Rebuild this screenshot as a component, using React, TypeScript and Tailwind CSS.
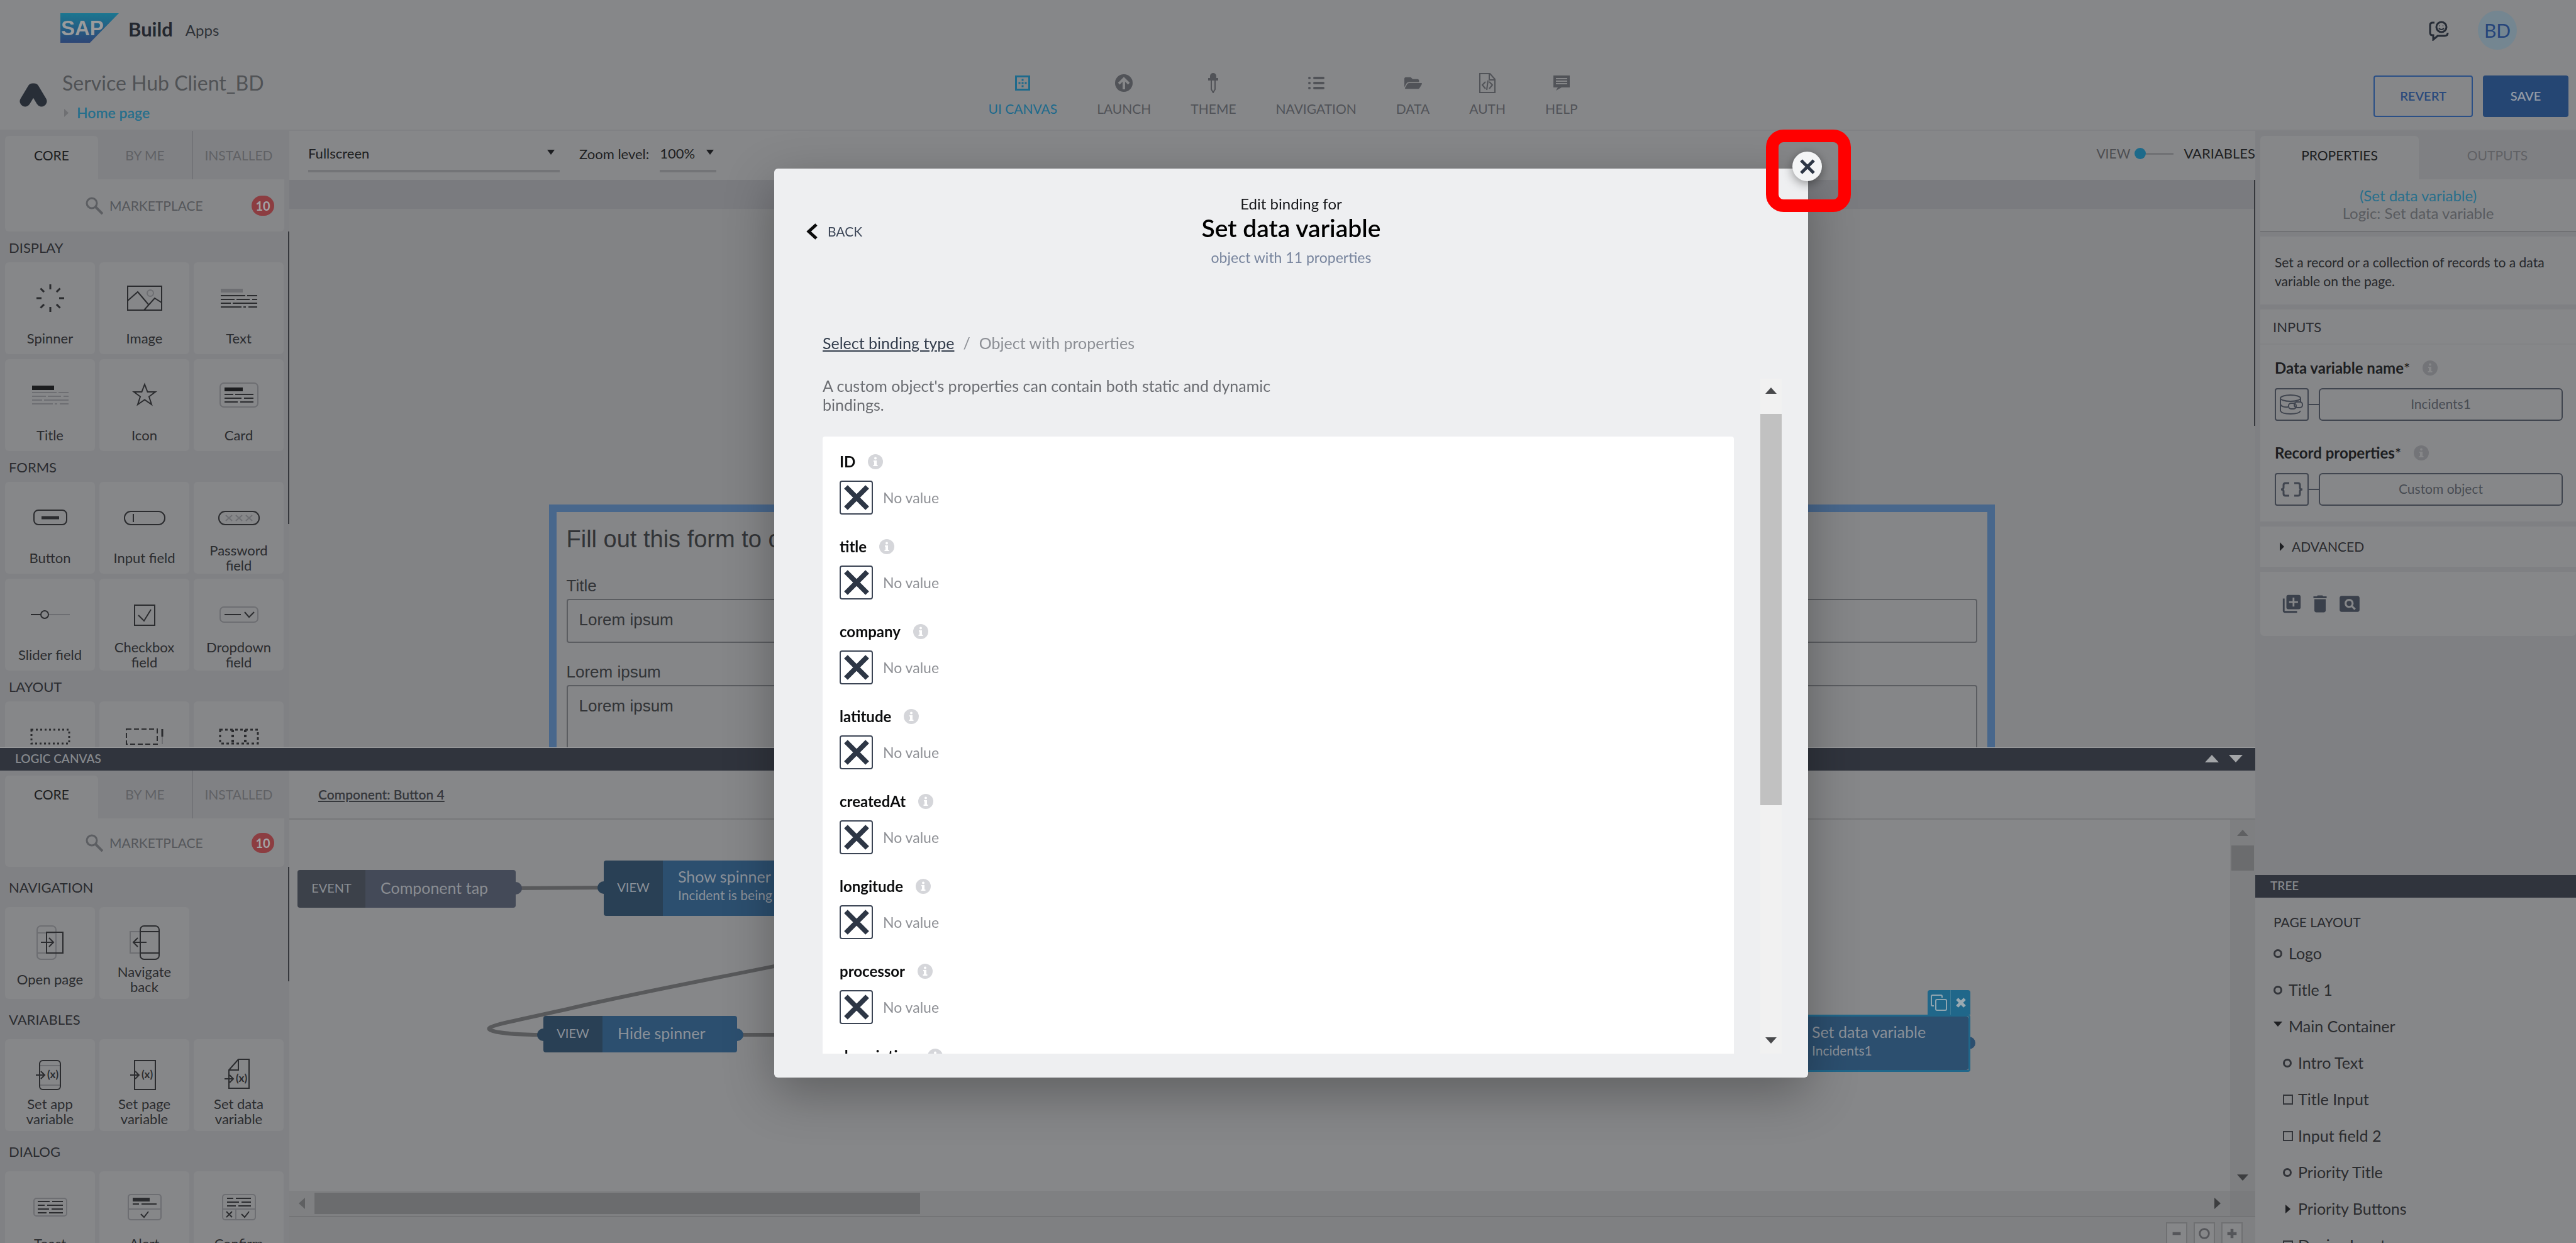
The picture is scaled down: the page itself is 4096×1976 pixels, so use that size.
import React from "react";
import { FaFolderOpen } from "react-icons/fa";
import { MdLibraryAdd, MdDelete, MdPageview } from "react-icons/md";

const INK = "#2b2c2f";
const FAINT = "#6d6e72";

/* ---------- Tile icons, drawn around the origin ---------- */

const textRows = [
  [[0, 39], [42, 58]],
  [[0, 22], [25, 46], [50, 58]],
  [[0, 16], [19, 58]],
  [[0, 33], [36, 40], [44, 58]],
];

function TextRows({ color, width = 2 }: { color: string; width?: number }) {
  return (
    <g stroke={color} strokeWidth={width}>
      {textRows.map((row, i) =>
        row.map(([a, b]) => <path key={`${i}-${a}`} d={`M${a - 29} ${-4 + i * 6}H${b - 29}`} />),
      )}
    </g>
  );
}

const tileIcons: Record<string, React.ReactNode> = {
  spinner: (
    <g stroke={INK} strokeWidth="3">
      {[0, 45, 90, 135, 180, 225, 270, 315].map((a) => (
        <path key={a} d="M0 -22V-14" transform={`rotate(${a})`} />
      ))}
    </g>
  ),
  image: (
    <g stroke={INK} strokeWidth="2">
      <rect x="-27" y="-19" width="54" height="38" />
      <path d="M-27 4L-11 -10L6 10M-1 19L16 0L27 7" />
      <circle cx="9" cy="-8" r="5" stroke={FAINT} />
    </g>
  ),
  text: (
    <g>
      <rect x="-29" y="-15" width="35" height="6" fill={FAINT} />
      <TextRows color={INK} />
    </g>
  ),
  title: (
    <g>
      <rect x="-29" y="-15" width="35" height="7" fill="#1c1d1f" />
      <TextRows color={FAINT} />
    </g>
  ),
  star: (
    <path
      d="M0 -17L4.600 -5H17L7 2.500L11 15L0 7.500L-11 15L-7 2.500L-17 -5H-4.600Z"
      stroke={INK}
      strokeWidth="2"
    />
  ),
  card: (
    <g stroke={INK} strokeWidth="3">
      <rect x="-30" y="-19" width="60" height="38" rx="6" stroke={FAINT} strokeWidth="2" />
      <path d="M-23 -9H6" stroke="#1c1d1f" strokeWidth="6" />
      <path d="M-23 -1H-9M-6 -1H23M-23 5H4M8 5H23M-23 11H-2M2 11H23" strokeWidth="2" />
    </g>
  ),
  button: (
    <g stroke={INK} strokeWidth="2">
      <rect x="-26" y="-12" width="52" height="23" rx="7" />
      <path d="M-14 0H14" strokeWidth="5" />
    </g>
  ),
  input: (
    <g stroke={INK} strokeWidth="2">
      <rect x="-32" y="-10" width="64" height="21" rx="10" />
      <path d="M-18 -6V7" />
    </g>
  ),
  password: (
    <g stroke={INK} strokeWidth="2">
      <rect x="-32" y="-10" width="64" height="21" rx="10" />
      <path
        d="M-21 -4L-11 5M-11 -4L-21 5M-5 -4L5 5M5 -4L-5 5M11 -4L21 5M21 -4L11 5"
        stroke={FAINT}
      />
    </g>
  ),
  slider: (
    <g stroke={INK} strokeWidth="2">
      <path d="M-2 0H31" stroke={FAINT} />
      <path d="M-31 0H-15" />
      <circle cx="-9" cy="0" r="6" />
    </g>
  ),
  checkbox: (
    <g stroke={INK} strokeWidth="2">
      <rect x="-16" y="-15" width="32" height="32" />
      <path d="M-10 1L-1 10L10 -8" />
    </g>
  ),
  dropdown: (
    <g stroke={INK} strokeWidth="2">
      <rect x="-30" y="-12" width="60" height="24" rx="6" stroke={FAINT} />
      <path d="M-23 0H3" />
      <path d="M9 -4L16 4L24 -4" />
    </g>
  ),
  container: (
    <rect x="-30" y="-12" width="60" height="22" stroke={INK} strokeWidth="3" strokeDasharray="3 4" />
  ),
  scroll: (
    <g stroke={INK} strokeWidth="2">
      <rect x="-29" y="-13" width="49" height="24" strokeDasharray="8 4" />
      <path d="M28 -13V11" stroke={FAINT} />
      <path d="M28 -13V-1" strokeWidth="3" />
    </g>
  ),
  row: (
    <g stroke={INK} strokeWidth="3" strokeDasharray="4 4">
      <rect x="-30" y="-12" width="60" height="22" />
      <path d="M-10 -12V10M10 -12V10" strokeWidth="4" />
    </g>
  ),
  openPage: (
    <g stroke={FAINT} strokeWidth="2">
      <rect x="-21" y="-27" width="30" height="53" rx="6" />
      <path d="M-21 -16H9M-21 16H9" />
      <rect x="-6" y="-17" width="26" height="33" stroke={INK} />
      <path d="M-15 -1H5M-2 -8L5 -1L-2 6" stroke={INK} />
    </g>
  ),
  navigateBack: (
    <g stroke={FAINT} strokeWidth="2">
      <rect x="-23" y="-18" width="20" height="34" />
      <rect x="-7" y="-27" width="30" height="53" rx="6" stroke={INK} fill="#868789" />
      <path d="M-7 -18H23M-7 16H23" stroke={INK} />
      <path d="M3 -1H-18M-11 -8L-18 -1L-11 6" stroke={INK} />
    </g>
  ),
  setApp: (
    <g>
      <path d="M-17 -15H17M-17 16H17" stroke={FAINT} strokeWidth="2" />
      <rect x="-17" y="-23" width="33" height="46" rx="5" stroke={INK} strokeWidth="2" />
      <VariableMark y={0} />
    </g>
  ),
  setPage: (
    <g>
      <rect x="-16" y="-23" width="33" height="46" stroke={INK} strokeWidth="2" />
      <VariableMark y={0} />
    </g>
  ),
  setData: (
    <g>
      <path d="M-16 -8L-1 -25H16V21H-16ZM-16 -8H-1V-25" stroke={INK} strokeWidth="2" />
      <VariableMark y={6} />
    </g>
  ),
  toast: (
    <g stroke={INK} strokeWidth="3">
      <rect x="-26" y="-14" width="52" height="28" rx="4" stroke={FAINT} strokeWidth="2" />
      <path d="M-20 -9H-1M3 -9H20M-20 -3H-9M-5 -3H20M-20 3H-2M2 3H20M-20 9H-6M-2 9H20" strokeWidth="2" />
    </g>
  ),
  alert: (
    <g stroke={INK} strokeWidth="2">
      <rect x="-26" y="-20" width="52" height="40" rx="4" stroke={FAINT} />
      <path d="M-26 3H26" stroke={FAINT} />
      <path d="M-19 -12H8" strokeWidth="6" />
      <path d="M-19 -5H-9M-5 -5H19M-6 11L-1 16L6 7" />
    </g>
  ),
  confirm: (
    <g stroke={INK} strokeWidth="2">
      <rect x="-26" y="-20" width="52" height="40" rx="4" stroke={FAINT} />
      <path d="M-26 3H26M-5 3V20" stroke={FAINT} />
      <path d="M-19 -14H-9M-5 -14H19M-19 -8H0M4 -8H19M-19 -2H-5M-1 -2H19" />
      <path d="M-20 7L-11 16M-11 7L-20 16M4 11L9 16L16 7" />
    </g>
  ),
};

function VariableMark({ y }: { y: number }) {
  return (
    <g transform={`translate(0 ${y})`}>
      <path d="M-23 0H-9M-15 -6L-9 0L-15 6" stroke={INK} strokeWidth="2" />
      <text x="4" y="5" fontSize="17" fontWeight="700" textAnchor="middle" fill={INK}>
        (x)
      </text>
    </g>
  );
}

/* ---------- Left palettes ---------- */

type TileData = [icon: string, label: string];

function Tile({ icon, label, lift }: { icon: string; label: string; lift?: boolean }) {
  return (
    <button type="button" className="flex h-[146px] flex-col items-center rounded-md bg-[#868789] pt-[27px]">
      <svg viewBox="-36 -30 72 60" fill="none" className="h-[60px] w-[72px] shrink-0">
        {tileIcons[icon]}
      </svg>
      <span
        className={`flex h-12 w-[124px] shrink-0 items-center justify-center text-center text-[22px] leading-6 text-[#2b2c2f] ${lift ? "mt-1" : "mt-[10px]"}`}
      >
        {label}
      </span>
    </button>
  );
}

function Palette({
  sections,
  lift,
}: {
  sections: { heading: string; tiles: TileData[] }[];
  lift?: boolean;
}) {
  return (
    <aside className="flex w-[460px] shrink-0 flex-col overflow-hidden bg-[#808184]">
      <div className={`flex shrink-0 pr-2 pl-2 ${lift ? "h-[76px]" : "h-[77px]"}`}>
        <button type="button" className="mt-2 w-[148px] rounded-t-md bg-[#868789] pb-2 text-[21px] text-[#1c1d20]">
          CORE
        </button>
        <button type="button" className="w-[149px] text-[21px] text-[#606165]">
          BY ME
        </button>
        <button type="button" className="flex-1 border-l-2 border-[#737478] text-[21px] text-[#606165]">
          INSTALLED
        </button>
      </div>
      <div
        className={`mr-2 ml-2 flex shrink-0 items-center rounded-b-md bg-[#868789] ${lift ? "h-[77px]" : "h-[83px]"}`}
      >
        <button type="button" className="ml-32 flex items-center gap-[10px] text-[21px] text-[#55575b]">
          <svg viewBox="0 0 28 28" fill="none" stroke="#5c5e62" strokeWidth="3" className="size-7">
            <circle cx="10" cy="10" r="8" />
            <path d="M16 16L27 27" strokeWidth="4" />
          </svg>
          MARKETPLACE
        </button>
        <span className="mr-4 ml-auto flex h-8 w-9 items-center justify-center rounded-full bg-[#8c3d41] text-xl font-bold text-[#a3a3a5]">
          10
        </span>
      </div>
      <div className="flex min-h-0 flex-1 overflow-hidden">
        <div className="flex-1">
          {sections.map((s) => (
            <section key={s.heading}>
              <h3
                className={`flex items-center pl-[14px] text-[22px] text-[#2b2c30] ${lift ? "h-16" : "h-[49px] pt-[2px]"}`}
              >
                {s.heading}
              </h3>
              <div className="mr-[7px] ml-2 grid grid-cols-3 gap-x-[7px] gap-y-2">
                {s.tiles.map(([icon, label]) => (
                  <Tile key={label} icon={icon} label={label} lift={lift} />
                ))}
              </div>
            </section>
          ))}
        </div>
        <div className={`w-[2px] bg-[#36383d] ${lift ? "h-[182px]" : "h-[465px]"}`} />
      </div>
    </aside>
  );
}

/* ---------- Header ---------- */

const navItems: { label: string; icon: React.ReactNode; active?: boolean }[] = [
  {
    label: "UI CANVAS",
    active: true,
    icon: (
      <svg viewBox="0 0 24 24" className="size-6" fill="none" stroke="currentColor" strokeWidth="3">
        <rect x="1.500" y="1.500" width="21" height="21" />
        <path d="M12 5.500V8.500M12 10.500V13.500M12 15.500V18.500M5.500 12H8.500M15.500 12H18.500" />
      </svg>
    ),
  },
  {
    label: "LAUNCH",
    icon: (
      <svg viewBox="0 0 28 28" className="size-7">
        <circle cx="14" cy="14" r="14" fill="currentColor" />
        <path d="M14 24V8M6 15L14 7L22 15" stroke="#868789" strokeWidth="4" fill="none" />
      </svg>
    ),
  },
  {
    label: "THEME",
    icon: (
      <svg viewBox="0 0 16 32" className="h-8 w-4" fill="none" stroke="currentColor" strokeWidth="2">
        <path d="M4 10V5a4 4 0 0 1 8 0V10Z" fill="currentColor" />
        <path d="M0 10H16" strokeWidth="4" />
        <path d="M5 12V26L8 31L11 26V12" />
      </svg>
    ),
  },
  {
    label: "NAVIGATION",
    icon: (
      <svg viewBox="0 0 26 22" className="h-[22px] w-[26px]" stroke="currentColor" strokeWidth="4" strokeLinecap="round">
        <path d="M2 3H2.100M2 11H2.100M2 19H2.100M10 3H24M10 11H24M10 19H24" />
      </svg>
    ),
  },
  { label: "DATA", icon: <FaFolderOpen className="size-7" /> },
  {
    label: "AUTH",
    icon: (
      <svg viewBox="0 0 26 32" className="h-8 w-[26px]" fill="none" stroke="currentColor" strokeWidth="2">
        <path d="M1 1H17L25 10V31H1ZM16 1V11H25" />
        <path d="M10 14L5 19L10 25M16 14L21 19L16 25M14 12L12 27" />
      </svg>
    ),
  },
  {
    label: "HELP",
    icon: (
      <svg viewBox="0 0 26 24" className="h-6 w-[26px]">
        <path d="M0 0H26V19H13L4 24L7 19H0Z" fill="currentColor" />
        <path d="M4 5H22M4 9H22M4 13H22" stroke="#868789" strokeWidth="2" />
      </svg>
    ),
  },
];

function Header() {
  return (
    <header className="flex h-[208px] shrink-0 flex-col border-b-2 border-[#808184] bg-[#868789]">
      <div className="flex h-[92px] items-start pt-[17px]">
        <svg viewBox="0 0 93 47" className="mt-1 ml-24 h-[47px] w-[93px]">
          <defs>
            <linearGradient id="sap" x1="0" y1="0" x2="0" y2="1">
              <stop offset="0" stopColor="#1b7690" />
              <stop offset="1" stopColor="#2e4676" />
            </linearGradient>
          </defs>
          <path d="M0 0H93L47 47H0Z" fill="url(#sap)" />
          <text
            x="1"
            y="35"
            fontSize="33"
            fontWeight="700"
            fontFamily="Liberation Sans, sans-serif"
            fill="#9a9b9c"
          >
            SAP
          </text>
        </svg>
        <h1 className="mt-[11px] ml-[15px] text-[31px] leading-9 font-bold text-[#23272f]">Build</h1>
        <span className="mt-[15px] ml-5 text-[24px] leading-8 text-[#2e3238]">Apps</span>
        <button type="button" aria-label="Feedback" className="mt-4 mr-[46px] ml-auto">
          <svg viewBox="0 0 32 32" fill="none" stroke="#262c36" strokeWidth="3" className="size-8">
            <path d="M9 3H6Q2 3 2 7V19Q2 23 6 23H7V30L14 24H25Q30 24 30 19" />
            <circle cx="20" cy="10" r="8" />
            <path d="M16 12Q20 16 24 12M17 8H18M22 8H23" strokeWidth="2" />
          </svg>
        </button>
        <button
          type="button"
          className="mr-[94px] size-[62px] rounded-full bg-[#748691] text-[30px] text-[#26457a]"
        >
          BD
        </button>
      </div>
      <div className="flex min-h-0 flex-1">
        <div className="flex flex-1">
          <svg viewBox="0 0 44 38" className="mt-10 ml-[31px] h-[38px] w-11">
            <path
              d="M9 29L21 9L23 9L35 29"
              fill="none"
              stroke="#282e37"
              strokeWidth="17"
              strokeLinecap="round"
              strokeLinejoin="round"
            />
          </svg>
          <div className="ml-6">
            <h2 className="mt-5 text-[32px] leading-[40px] text-[#505255]">Service Hub Client_BD</h2>
            <div className="mt-[11px] flex items-center gap-[13px] pl-[3px]">
              <svg viewBox="0 0 7 13" className="h-[13px] w-[7px]">
                <path d="M0 0L7 6.500L0 13Z" fill="#6f7073" />
              </svg>
              <a href="#home" className="text-[23px] leading-8 font-semibold text-[#266f8c]">
                Home page
              </a>
            </div>
          </div>
        </div>
        <nav className="mr-1 flex gap-[63px] pt-6">
          {navItems.map((item) => (
            <a
              key={item.label}
              href="#nav"
              className={`flex flex-col items-center gap-[11px] text-[21px] leading-7 ${item.active ? "text-[#1d6a8c]" : "text-[#515358]"}`}
            >
              <span className="flex h-8 items-center">{item.icon}</span>
              {item.label}
            </a>
          ))}
        </nav>
        <div className="flex flex-1 items-start justify-end gap-4 pt-7 pr-3">
          <button
            type="button"
            className="h-[66px] w-[158px] rounded border-2 border-[#2a4f86] pb-[2px] text-xl font-semibold text-[#2a4a7c]"
          >
            REVERT
          </button>
          <button
            type="button"
            className="h-[66px] w-[136px] rounded bg-[#254673] pb-[2px] text-xl font-semibold text-[#929aa5]"
          >
            SAVE
          </button>
        </div>
      </div>
    </header>
  );
}

/* ---------- UI canvas ---------- */

function Triangle({ dir, color, className }: { dir: "up" | "down" | "left" | "right"; color: string; className: string }) {
  const d = {
    up: "M0 10L5 0L10 10Z",
    down: "M0 0L5 10L10 0Z",
    left: "M10 0L0 5L10 10Z",
    right: "M0 0L10 5L0 10Z",
  }[dir];
  return (
    <svg viewBox="0 0 10 10" preserveAspectRatio="none" className={className}>
      <path d={d} fill={color} />
    </svg>
  );
}

function UiCanvas() {
  return (
    <div className="flex min-w-0 flex-1 flex-col bg-[#828385]">
      <div className="flex h-[78px] shrink-0 items-start bg-[#868789] pl-[30px] text-[22px] text-[#1e1f22]">
        <label className="relative mt-4 block w-[400px] border-b-4 border-[#737477]">
          <span className="sr-only">Screen size</span>
          <select className="h-[46px] w-full appearance-none pb-2">
            <option>Fullscreen</option>
          </select>
          <Triangle dir="down" color="#1c1d20" className="absolute top-[14px] right-2 h-2 w-3" />
        </label>
        <label htmlFor="zoom" className="mt-[21px] ml-[31px] leading-8">
          Zoom level:
        </label>
        <div className="relative mt-4 ml-[17px] w-[90px] border-b-4 border-[#737477]">
          <select id="zoom" className="h-[46px] w-full appearance-none pb-2">
            <option>100%</option>
          </select>
          <Triangle dir="down" color="#1c1d20" className="absolute top-[14px] right-1 h-2 w-3" />
        </div>
        <label className="mt-5 ml-auto flex items-center leading-8">
          <span className="text-[21px] text-[#4c4d51]">VIEW</span>
          <input type="checkbox" className="sr-only" />
          <span className="ml-[7px] size-[18px] rounded-full bg-[#1d6a8a]" />
          <span className="h-[3px] w-[44px] bg-[#707174]" />
          <span className="ml-4">VARIABLES</span>
        </label>
      </div>
      <div className="flex min-h-0 flex-1">
        <div className="flex min-w-0 flex-1 flex-col overflow-hidden">
          <div className="h-[46px] shrink-0 bg-[#7a7b7f]" />
          <div className="mx-auto mt-[470px] h-[500px] w-[2299px] shrink-0 border-[12px] border-[#48678c] bg-[#858688] px-4 pt-[18px] font-['Liberation_Sans',sans-serif] text-[26px] text-[#323437]">
            <h2 className="text-[38px] leading-[50px]">Fill out this form to create an incident</h2>
            <label htmlFor="f-title" className="mt-[31px] block leading-9">
              Title
            </label>
            <input
              id="f-title"
              defaultValue="Lorem ipsum"
              className="mt-[3px] block h-[70px] w-full rounded border-2 border-[#5b5d61] px-[18px] pb-1"
            />
            <label htmlFor="f-text" className="mt-7 block leading-9">
              Lorem ipsum
            </label>
            <textarea
              id="f-text"
              defaultValue="Lorem ipsum"
              className="mt-[3px] block h-[300px] w-full resize-none rounded border-2 border-[#5b5d61] px-[18px] py-3"
            />
          </div>
        </div>
        <div className="h-[391px] w-[2px] bg-[#36383d]" />
      </div>
    </div>
  );
}

/* ---------- Logic canvas ---------- */

function FlowNode({
  kind,
  title,
  note,
  className,
  tagClass,
  bodyClass,
}: {
  kind: string;
  title: string;
  note?: string;
  className: string;
  tagClass: string;
  bodyClass: string;
}) {
  return (
    <div className={`absolute flex ${className}`}>
      <div className={`flex items-center justify-center rounded-l pb-1 text-xl ${tagClass}`}>{kind}</div>
      <div
        className={`flex min-w-0 flex-1 flex-col justify-center rounded-r pl-6 whitespace-nowrap ${note ? "pb-[10px]" : "pb-1"} ${bodyClass}`}
      >
        <span className="text-[25px] leading-8">{title}</span>
        {note && <span className="text-[21px] leading-7">{note}</span>}
      </div>
    </div>
  );
}

function LogicCanvas() {
  return (
    <div className="flex min-w-0 flex-1 flex-col bg-[#868789]">
      <div className="flex h-[78px] shrink-0 items-center border-b-2 border-[#77787a] pl-[46px]">
        <a href="#component" className="text-[21px] font-semibold text-[#36383c] underline">
          Component: Button 4
        </a>
      </div>
      <div className="flex min-h-0 flex-1">
        <div className="relative min-w-0 flex-1 overflow-hidden">
          <svg className="absolute inset-0 size-full" fill="none" stroke="#58595b" strokeWidth="6">
            <path d="M360 109L500 108" />
            <path d="M840 219C690 250 564 273 460 297S308 328 319 334S370 342 404 342" />
            <path d="M712 342H900" />
            <circle cx="360" cy="109" r="10" fill="#444a58" stroke="none" />
            <circle cx="500" cy="108" r="10" fill="#294055" stroke="none" />
            <circle cx="404" cy="342" r="10" fill="#294055" stroke="none" />
            <circle cx="712" cy="342" r="10" fill="#2c4f6f" stroke="none" />
            <circle cx="2671" cy="355" r="10" fill="#2c4f6f" stroke="none" />
          </svg>
          <FlowNode
            kind="EVENT"
            title="Component tap"
            className="top-20 left-[13px] h-[60px] w-[347px] text-[#8a8d92]"
            tagClass="w-[108px] bg-[#3c414a]"
            bodyClass="bg-[#444a58]"
          />
          <FlowNode
            kind="VIEW"
            title="Show spinner"
            note="Incident is being created"
            className="top-[65px] left-[500px] h-[88px] w-[340px] text-[#8b9199]"
            tagClass="w-[94px] bg-[#294055]"
            bodyClass="bg-[#2c4f6f]"
          />
          <FlowNode
            kind="VIEW"
            title="Hide spinner"
            className="top-[312px] left-[404px] h-[58px] w-[308px] text-[#8b9199]"
            tagClass="w-[94px] bg-[#294055]"
            bodyClass="bg-[#2c4f6f]"
          />
          <FlowNode
            kind="DATA"
            title="Set data variable"
            note="Incidents1"
            className="top-[310px] left-[2303px] h-[91px] w-[370px] rounded border-[3px] border-[#20678a] text-[#8b9199]"
            tagClass="w-[91px] bg-[#294055]"
            bodyClass="bg-[#2c4f6f]"
          />
          <div className="absolute top-[271px] left-[2605px] flex h-[39px] w-[68px] rounded-t bg-[#20678a]">
            <button type="button" aria-label="Copy" className="flex w-[37px] items-center justify-center border-r border-[#3f7b96]">
              <svg viewBox="0 0 26 26" fill="none" stroke="#8fa5b0" strokeWidth="2" className="size-[26px]">
                <rect x="8" y="8" width="17" height="17" rx="2" />
                <path d="M5 18H3Q1 18 1 16V3Q1 1 3 1H16Q18 1 18 3V5" />
              </svg>
            </button>
            <button type="button" aria-label="Remove" className="flex flex-1 items-center justify-center">
              <svg viewBox="0 0 16 16" stroke="#9aa9b1" strokeWidth="5" className="size-4">
                <path d="M2 2L14 14M14 2L2 14" />
              </svg>
            </button>
          </div>
        </div>
        <div className="flex w-10 shrink-0 flex-col items-center bg-[#7e7f81] pt-4 pb-4">
          <Triangle dir="up" color="#5f6062" className="h-[10px] w-[18px]" />
          <div className="mt-[15px] h-10 w-9 bg-[#6b6c6e]" />
          <Triangle dir="down" color="#3d3e40" className="mt-auto h-[10px] w-[18px]" />
        </div>
      </div>
      <div className="flex h-10 shrink-0 items-center bg-[#7f8082]">
        <Triangle dir="left" color="#5f6062" className="ml-[15px] h-[18px] w-[10px]" />
        <div className="ml-[15px] h-[34px] w-[963px] bg-[#6b6c6e]" />
        <Triangle dir="right" color="#3d3e40" className="mr-[15px] ml-auto h-[18px] w-[10px]" />
        <div className="h-full w-10 bg-[#7a7b7d]" />
      </div>
      <div className="flex h-[43px] shrink-0 justify-end gap-[10px] overflow-hidden border-t-2 border-[#737476] bg-[#7f8082] pt-2 pr-5">
        {["M5 12H19", "", "M4 12H20M12 4V20"].map((d, i) => (
          <button
            key={i}
            type="button"
            aria-label={["Zoom out", "Reset zoom", "Zoom in"][i]}
            className="flex h-9 w-[34px] shrink-0 items-center justify-center border-2 border-[#6f7072] bg-[#868789]"
          >
            <svg viewBox="0 0 24 24" fill="none" stroke="#55565a" strokeWidth={d ? 5 : 3} className="size-[22px]">
              {d ? <path d={d} /> : <circle cx="12" cy="12" r="8" />}
            </svg>
          </button>
        ))}
      </div>
    </div>
  );
}

/* ---------- Right column ---------- */

function InfoIcon({ bg, fg }: { bg: string; fg: string }) {
  return (
    <svg viewBox="0 0 24 24" className="size-6 shrink-0">
      <circle cx="12" cy="12" r="12" fill={bg} />
      <circle cx="12" cy="6.500" r="2" fill={fg} />
      <path d="M9 10H14V17H15.500V19H8.500V17H10V12H9Z" fill={fg} />
    </svg>
  );
}

function BindingRow({ label, value, icon }: { label: string; value: string; icon: React.ReactNode }) {
  return (
    <div className="h-[135px] pt-[21px] pr-[21px] pl-[23px]">
      <div className="flex items-center gap-5 text-2xl leading-8 font-bold text-[#1d1e21]">
        <span>
          {label}
          <span className="font-normal">*</span>
        </span>
        <InfoIcon bg="#737478" fg="#868789" />
      </div>
      <div className="mt-4 flex items-start">
        <button
          type="button"
          aria-label={`${label} binding type`}
          className="flex h-[52px] w-[54px] items-center justify-center rounded border-2 border-[#40454f]"
        >
          {icon}
        </button>
        <span className="mt-[25px] h-[2px] w-4 bg-[#40454f]" />
        <button type="button" className="h-[52px] flex-1 rounded-md border-2 border-[#40454f] pb-[2px] text-[21px] text-[#484c53]">
          {value}
        </button>
      </div>
    </div>
  );
}

type TreeRow = { mark: "dot" | "box" | "down" | "right"; label: string; nested?: boolean };

const treeRows: TreeRow[] = [
  { mark: "dot", label: "Logo" },
  { mark: "dot", label: "Title 1" },
  { mark: "down", label: "Main Container" },
  { mark: "dot", label: "Intro Text", nested: true },
  { mark: "box", label: "Title Input", nested: true },
  { mark: "box", label: "Input field 2", nested: true },
  { mark: "dot", label: "Priority Title", nested: true },
  { mark: "right", label: "Priority Buttons", nested: true },
  { mark: "box", label: "Device Input", nested: true },
];

function TreeMark({ mark }: { mark: TreeRow["mark"] }) {
  if (mark === "down") return <Triangle dir="down" color="#1e1f22" className="mb-2 h-2 w-[14px]" />;
  if (mark === "right") return <Triangle dir="right" color="#1e1f22" className="ml-1 h-[14px] w-2" />;
  if (mark === "box") return <span className="size-4 border-2 border-[#33353a]" />;
  return <span className="size-[14px] rounded-full border-[3px] border-[#33353a]" />;
}

function RightColumn() {
  return (
    <aside className="flex w-[510px] shrink-0 flex-col bg-[#7f8083]">
      <div className="min-h-0 flex-[1183] overflow-hidden pl-2">
        <div className="flex h-[77px]">
          <button type="button" className="mt-2 w-[252px] rounded-t-md bg-[#868789] pb-2 text-[21px] text-[#1c1d20]">
            PROPERTIES
          </button>
          <button type="button" className="flex-1 text-[21px] text-[#606165]">
            OUTPUTS
          </button>
        </div>
        <div className="h-[84px] border-b-2 border-[#707174] bg-[#868789] pt-3 text-center text-2xl leading-7">
          <p className="text-[#286f8c]">(Set data variable)</p>
          <p className="text-[#595b5f]">Logic: Set data variable</p>
        </div>
        <div className="mt-[7px] h-[108px] bg-[#868789] pt-[26px] pl-[23px] text-[21px] leading-[30px] text-[#26272b]">
          Set a record or a collection of records to a data
          <br />
          variable on the page.
        </div>
        <section className="mt-2 h-[337px] bg-[#868789]">
          <h3 className="flex h-14 items-center border-b-2 border-[#828385] pl-5 text-[22px] text-[#2a2b2f]">INPUTS</h3>
          <BindingRow
            label="Data variable name"
            value="Incidents1"
            icon={
              <svg viewBox="0 0 38 32" fill="none" stroke="#40454f" strokeWidth="2" className="h-8 w-[38px]">
                <ellipse cx="17" cy="6" rx="16" ry="5" />
                <path d="M1 6V26Q3 31 17 31Q31 31 33 26M33 6V12M1 16Q4 21 13 20" />
                <rect x="14" y="14" width="12" height="9" rx="4" />
                <rect x="23" y="12" width="13" height="9" rx="4" />
              </svg>
            }
          />
          <BindingRow
            label="Record properties"
            value="Custom object"
            icon={
              <svg viewBox="0 0 36 24" fill="none" stroke="#40454f" strokeWidth="3" className="h-6 w-9">
                <path d="M14 2H8Q5 2 5 5V9Q5 12 1 12Q5 12 5 15V19Q5 22 8 22H14M22 2H28Q31 2 31 5V9Q31 12 35 12Q31 12 31 15V19Q31 22 28 22H22" />
              </svg>
            }
          />
        </section>
        <button
          type="button"
          className="mt-2 flex h-16 w-full items-center gap-3 bg-[#868789] pl-[31px] text-[21px] text-[#2a2b2f]"
        >
          <Triangle dir="right" color="#1e1f22" className="h-[14px] w-[7px]" />
          ADVANCED
        </button>
        <div className="mt-2 flex h-[102px] items-center gap-[10px] rounded-b-md bg-[#868789] pl-[33px] text-[#3a404b]">
          <button type="button" aria-label="Duplicate">
            <MdLibraryAdd className="size-[34px]" />
          </button>
          <button type="button" aria-label="Delete">
            <MdDelete className="size-9" />
          </button>
          <button type="button" aria-label="Inspect">
            <MdPageview className="size-[38px]" />
          </button>
        </div>
      </div>
      <div className="min-h-0 flex-[585] overflow-hidden bg-[#868789]">
        <h3 className="flex h-9 items-center bg-[#30343d] pb-[2px] pl-6 text-[19px] font-semibold text-[#85888c]">TREE</h3>
        <h4 className="mt-[25px] pl-[29px] text-[21px] leading-7 text-[#2a2b2f]">PAGE LAYOUT</h4>
        <ul className="mt-[7px]">
          {treeRows.map((r) => (
            <li key={r.label} className={`flex h-[58px] items-center text-[25px] text-[#2b2c2f] ${r.nested ? "pl-11" : "pl-[29px]"}`}>
              <span className="flex w-6 items-center">
                <TreeMark mark={r.mark} />
              </span>
              {r.label}
            </li>
          ))}
        </ul>
      </div>
    </aside>
  );
}

/* ---------- Dialog ---------- */

const fields = ["ID", "title", "company", "latitude", "createdAt", "longitude", "processor", "description"];

function BindingDialog() {
  return (
    <div className="fixed inset-0 flex justify-center pt-[268px] pb-[263px] pl-[10px]">
      <div
        role="dialog"
        aria-label="Edit binding for Set data variable"
        className="relative flex h-full w-[1644px] flex-col rounded-md bg-[#eeeff1] shadow-[0_24px_80px_rgba(0,0,0,0.3)]"
      >
        <div className="grid h-[258px] shrink-0 grid-cols-3 pt-[38px]">
          <button type="button" className="mt-[46px] ml-[51px] flex h-8 items-center gap-4 text-[21px] text-[#3d4758]">
            <svg viewBox="0 0 18 26" fill="none" stroke="#0b0b0c" strokeWidth="5" className="h-[26px] w-[18px]">
              <path d="M16 2L4 13L16 24" />
            </svg>
            BACK
          </button>
          <div className="text-center">
            <p className="mt-[2px] text-2xl leading-8 text-[#16171a]">Edit binding for</p>
            <h2 className="mt-[2px] text-[39px] leading-10 font-semibold whitespace-nowrap text-black">Set data variable</h2>
            <p className="mt-[11px] text-[23px] leading-8 text-[#77849d]">object with 11 properties</p>
          </div>
        </div>
        <div className="ml-[77px] flex h-10 shrink-0 items-center gap-[14px] text-[25px] text-[#8c8f95]">
          <a href="#binding" className="text-[#333d4c] underline">
            Select binding type
          </a>
          <span>/</span>
          <span>Object with properties</span>
        </div>
        <div className="mt-9 mb-[38px] ml-[77px] flex min-h-0 flex-1">
          <div className="flex-1 overflow-hidden">
            <p className="mt-[-4px] w-[760px] text-[25px] leading-[30px] text-[#6b6d72]">
              A custom object's properties can contain both static and dynamic bindings.
            </p>
            <div className="mt-9 mr-[42px] rounded-t bg-white pt-6 pl-[27px]">
              {fields.map((f) => (
                <div key={f} className="h-[135px]">
                  <div className="flex items-center gap-5 text-2xl leading-8 font-bold text-[#0c0d0e]">
                    {f}
                    <InfoIcon bg="#d5d6da" fg="#ffffff" />
                  </div>
                  <div className="mt-[14px] flex items-center gap-4">
                    <button
                      type="button"
                      aria-label={`${f} binding`}
                      className="flex h-[54px] w-[53px] items-center justify-center rounded border-2 border-[#3b4454]"
                    >
                      <svg viewBox="0 0 40 40" stroke="#2d3645" strokeWidth="8" className="size-10">
                        <path d="M3 3L37 37M37 3L3 37" />
                      </svg>
                    </button>
                    <span className="text-[23px] text-[#8f9196]">No value</span>
                  </div>
                </div>
              ))}
            </div>
          </div>
          <div className="mr-[42px] flex w-[34px] shrink-0 flex-col items-center bg-[#f1f1f1] pt-[14px] pb-4">
            <Triangle dir="up" color="#48494b" className="h-[10px] w-[18px]" />
            <div className="mt-8 h-[622px] w-[34px] bg-[#c1c1c1]" />
            <Triangle dir="down" color="#48494b" className="mt-auto h-[10px] w-[18px]" />
          </div>
        </div>
        <div className="pointer-events-none absolute -top-[62px] -right-[68px] h-[131px] w-[135px] rounded-[28px] border-[20px] border-[#ff0000]" />
        <button
          type="button"
          aria-label="Close"
          className="absolute -top-[27px] -right-[22px] flex size-[47px] items-center justify-center rounded-full bg-[#f4f5f6] shadow-[0_4px_16px_rgba(0,0,0,0.4)]"
        >
          <svg viewBox="0 0 24 24" stroke="#2d3645" strokeWidth="5" className="size-6">
            <path d="M2 2L22 22M22 2L2 22" />
          </svg>
        </button>
      </div>
    </div>
  );
}

export default function App() {
  return (
    <div className="flex h-screen flex-col overflow-hidden bg-[#868789] font-[Lato,sans-serif]">
      <Header />
      <div className="flex min-h-0 flex-1">
        <main className="flex min-w-0 flex-1 flex-col">
          <div className="flex min-h-0 flex-[980] overflow-hidden">
            <Palette
              sections={[
                {
                  heading: "DISPLAY",
                  tiles: [
                    ["spinner", "Spinner"],
                    ["image", "Image"],
                    ["text", "Text"],
                    ["title", "Title"],
                    ["star", "Icon"],
                    ["card", "Card"],
                  ],
                },
                {
                  heading: "FORMS",
                  tiles: [
                    ["button", "Button"],
                    ["input", "Input field"],
                    ["password", "Password field"],
                    ["slider", "Slider field"],
                    ["checkbox", "Checkbox field"],
                    ["dropdown", "Dropdown field"],
                  ],
                },
                {
                  heading: "LAYOUT",
                  tiles: [
                    ["container", "Container"],
                    ["scroll", "Scroll view"],
                    ["row", "Row"],
                  ],
                },
              ]}
            />
            <UiCanvas />
          </div>
          <div className="flex min-h-0 flex-[788] flex-col overflow-hidden">
            <div className="flex h-[37px] shrink-0 items-center border-t border-[#9a9b9d] bg-[#30343d] pr-5 pb-[2px] pl-6">
              <h3 className="text-[19px] font-semibold text-[#85888c]">LOGIC CANVAS</h3>
              <button type="button" aria-label="Expand" className="mr-4 ml-auto">
                <Triangle dir="up" color="#a3a5a8" className="h-3 w-[22px]" />
              </button>
              <button type="button" aria-label="Collapse">
                <Triangle dir="down" color="#a3a5a8" className="h-3 w-[22px]" />
              </button>
            </div>
            <div className="flex min-h-0 flex-1">
              <Palette
                lift
                sections={[
                  {
                    heading: "NAVIGATION",
                    tiles: [
                      ["openPage", "Open page"],
                      ["navigateBack", "Navigate back"],
                    ],
                  },
                  {
                    heading: "VARIABLES",
                    tiles: [
                      ["setApp", "Set app variable"],
                      ["setPage", "Set page variable"],
                      ["setData", "Set data variable"],
                    ],
                  },
                  {
                    heading: "DIALOG",
                    tiles: [
                      ["toast", "Toast"],
                      ["alert", "Alert"],
                      ["confirm", "Confirm"],
                    ],
                  },
                ]}
              />
              <LogicCanvas />
            </div>
          </div>
        </main>
        <RightColumn />
      </div>
      <BindingDialog />
    </div>
  );
}
